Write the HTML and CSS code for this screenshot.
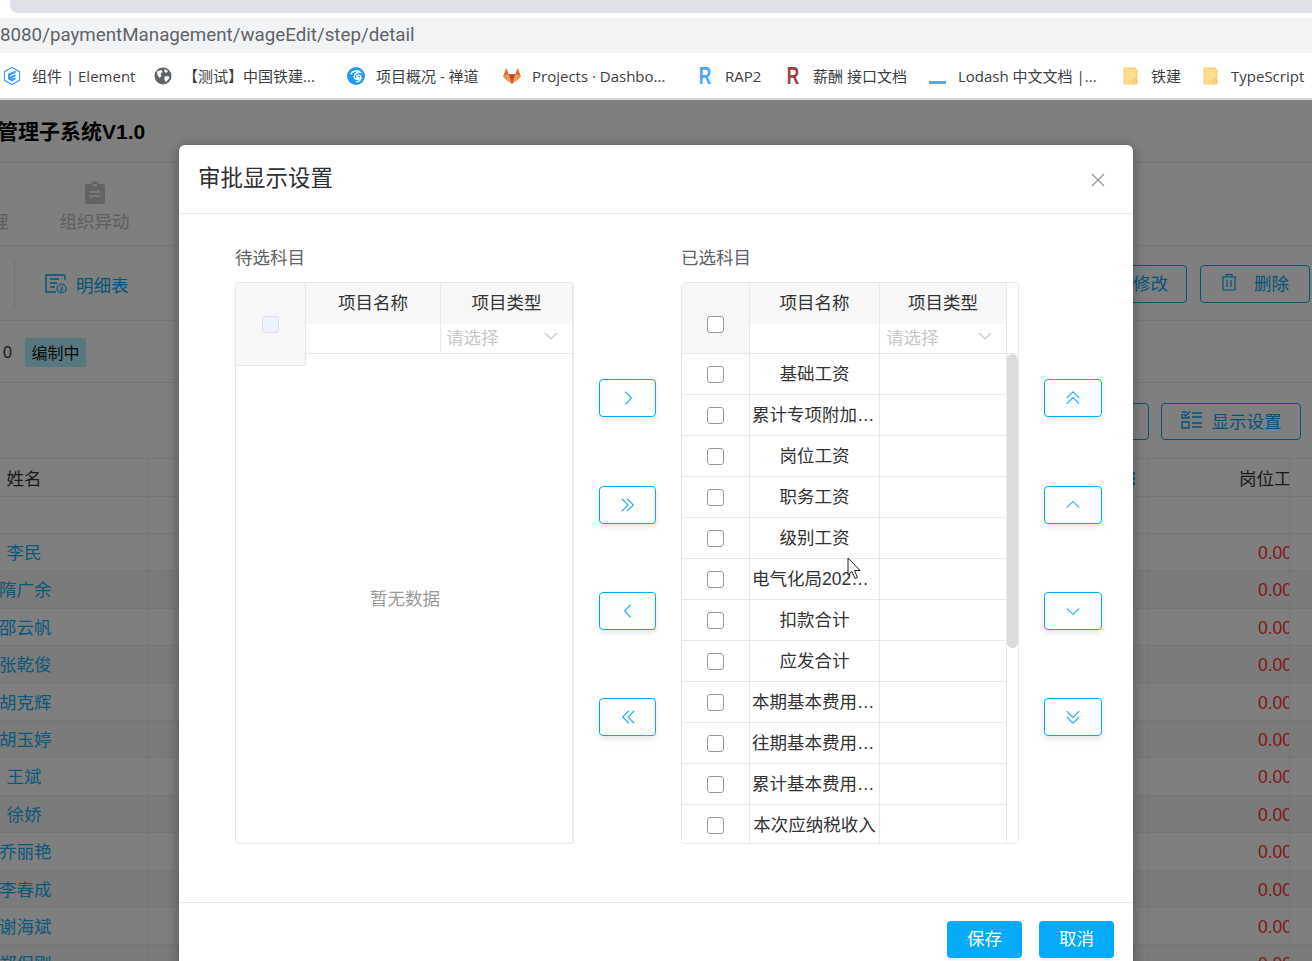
FILE: index.html
```html
<!DOCTYPE html>
<html lang="zh-CN">
<head>
  <meta charset="UTF-8" />
  <title>审批显示设置</title>
  <link rel="stylesheet" href="styles.css">
</head>
<body>
  <div class="tabstrip"><div class="tab"></div></div>
  <div class="urlbar">8080/paymentManagement/wageEdit/step/detail</div>

  <div class="bookmarks">
    <div class="bm">
      <svg class="bm-icon" viewBox="0 0 18 18"><path d="M9 0.5 16.5 4.7V13.3L9 17.5 1.5 13.3V4.7Z" fill="#fff" stroke="#409eff" stroke-width="1.2"/><path d="M5 6.8 12.6 3.6V6L7.4 8.2V9.4L12.6 7.2V9.6L7.4 11.8 12.6 10.4V12.4L9 14.4 5 12.2Z" fill="#409eff"/></svg>
      <span class="bm-text">组件 | Element</span>
    </div>
    <div class="bm">
      <svg class="bm-icon" viewBox="0 0 18 18"><circle cx="9" cy="9" r="8.5" fill="#5f6368"/><path d="M3 4.5 7.5 3 8.5 5 6.5 7 7.5 9 5.5 11 3.5 8ZM10.5 9.5 14.5 9 15.5 11 12 15 10.5 13ZM10.5 2 14 4 12.5 6 10.5 5Z" fill="#fff"/></svg>
      <span class="bm-text">【测试】中国铁建...</span>
    </div>
    <div class="bm">
      <svg class="bm-icon" viewBox="0 0 20 20"><circle cx="10" cy="10" r="10" fill="#1e9bf0"/><path d="M4 8C6 4 12 3 15 6 12 5.500 8 7 8 10.500 8 13.500 12 14.500 14 12.500 13 12.500 11 12 11 10.500 11 9 14 8.500 15.500 10.500 16.500 13 14 16.500 10 16.500" fill="none" stroke="#fff" stroke-width="1.600"/></svg>
      <span class="bm-text">项目概况 - 禅道</span>
    </div>
    <div class="bm">
      <svg class="bm-icon" viewBox="0 0 20 20"><path d="M10 19 1 12 0.500 9.500 3.500 1 6.500 8H13.500L16.500 1 19.500 9.500 19 12Z" fill="#e2673d"/><path d="M10 19 6.500 8H13.500Z" fill="#c8452b"/><path d="M10 19 1 12 0.500 9.500 6.500 8ZM10 19 19 12 19.500 9.500 13.500 8Z" fill="#eb9a58"/></svg>
      <span class="bm-text">Projects · Dashbo...</span>
    </div>
    <div class="bm">
      <span class="bm-r bm-r-blue">R</span>
      <span class="bm-text">RAP2</span>
    </div>
    <div class="bm">
      <span class="bm-r bm-r-red">R</span>
      <span class="bm-text">薪酬 接口文档</span>
    </div>
    <div class="bm">
      <span class="bm-line"></span>
      <span class="bm-text">Lodash 中文文档 |...</span>
    </div>
    <div class="bm">
      <svg class="bm-icon" viewBox="0 0 18 18"><path d="M2 1H13L15 3V17H2Z" fill="#fbdc8e" stroke="#f8ce6b"/><path d="M12 16V12.500C12 11.500 14.500 11.500 14.500 12.500V16" fill="none" stroke="#f3c14f"/></svg>
      <span class="bm-text">铁建</span>
    </div>
    <div class="bm">
      <svg class="bm-icon" viewBox="0 0 18 18"><path d="M2 1H13L15 3V17H2Z" fill="#fbdc8e" stroke="#f8ce6b"/><path d="M12 16V12.500C12 11.500 14.500 11.500 14.500 12.500V16" fill="none" stroke="#f3c14f"/></svg>
      <span class="bm-text">TypeScript</span>
    </div>
  </div>

  <div class="page">
    <div class="app-head"><span class="app-title">管理子系统V1.0</span></div>

    <div class="nav">
      <span class="nav-cut">理</span>
      <div class="nav-item">
        <svg class="nav-icon" viewBox="0 0 20 23"><path d="M2 3H6.500V1.500C6.500 0 13.500 0 13.500 1.500V3H18C19 3 20 4 20 5V21C20 22 19 23 18 23H2C1 23 0 22 0 21V5C0 4 1 3 2 3Z" fill="#c6c6c6"/><path d="M8 4H12" stroke="#fff" stroke-width="2"/><path d="M5 11H15L12.500 9M15 15H5L7.500 17" fill="none" stroke="#fff" stroke-width="1.300"/></svg>
        <span>组织异动</span>
      </div>
    </div>

    <div class="toolbar">
      <div class="toolbar-left">
        <span class="divider"></span>
        <svg class="detail-icon" viewBox="0 0 22 20"><path d="M20 1H1V18H11M20 1V6" fill="none" stroke="currentColor" stroke-width="1.400"/><path d="M5 5H14M5 9H12M5 13H10" stroke="currentColor" stroke-width="1.300"/><circle cx="16.500" cy="14.500" r="4.500" fill="none" stroke="currentColor" stroke-width="1.200"/><path d="M14.700 12 16.500 14.500 18.300 12M14.500 15H18.500M14.500 17H18.500M16.500 14.500V18.500" fill="none" stroke="currentColor" stroke-width=".8"/></svg>
        <span class="link">明细表</span>
      </div>
      <div class="toolbar-right">
        <button class="page-btn page-btn-edit">修改</button>
        <button class="page-btn page-btn-del">
          <svg class="del-icon" viewBox="0 0 16 17"><path d="M0.500 3H15.500M5 3V0.700H11V3M2 3V16H14V3M6 6V13M10 6V13" fill="none" stroke="currentColor" stroke-width="1.200"/></svg>
          <span>删除</span>
        </button>
      </div>
    </div>

    <div class="info">
      <span class="info-num">0</span>
      <span class="tag">编制中</span>
    </div>

    <div class="actions">
      <button class="page-btn page-btn-plain"></button>
      <button class="page-btn page-btn-set">
        <svg class="set-icon" viewBox="0 0 22 18"><path d="M1 3V7H8V5M1 11H8V17H1ZM11 2H21M11 6H21M11 12H21M11 16H21" fill="none" stroke="currentColor" stroke-width="1.400"/><path d="M1 1H6M2.500 3 4.500 5 9 0.500" fill="none" stroke="currentColor" stroke-width="1.400"/></svg>
        <span>显示设置</span>
      </button>
    </div>

    <div class="grid-head row"><div class="c-name"><span class="name-in name-dark">姓名</span></div><div class="c-mid"><span class="dots"></span></div><div class="c-num c-title">岗位工资</div></div>
    <div class="grid-filter row"><div class="c-name"></div><div class="c-mid"></div><div class="c-num"></div></div>
    <div class="row"><div class="c-name"><span class="name-in">李民</span></div><div class="c-mid"></div><div class="c-num">0.00</div></div>
    <div class="row row-alt"><div class="c-name"><span class="name-in">隋广余</span></div><div class="c-mid"></div><div class="c-num">0.00</div></div>
    <div class="row"><div class="c-name"><span class="name-in">邵云帆</span></div><div class="c-mid"></div><div class="c-num">0.00</div></div>
    <div class="row row-alt"><div class="c-name"><span class="name-in">张乾俊</span></div><div class="c-mid"></div><div class="c-num">0.00</div></div>
    <div class="row"><div class="c-name"><span class="name-in">胡克辉</span></div><div class="c-mid"></div><div class="c-num">0.00</div></div>
    <div class="row row-alt"><div class="c-name"><span class="name-in">胡玉婷</span></div><div class="c-mid"></div><div class="c-num">0.00</div></div>
    <div class="row"><div class="c-name"><span class="name-in">王斌</span></div><div class="c-mid"></div><div class="c-num">0.00</div></div>
    <div class="row row-alt"><div class="c-name"><span class="name-in">徐娇</span></div><div class="c-mid"></div><div class="c-num">0.00</div></div>
    <div class="row"><div class="c-name"><span class="name-in">乔丽艳</span></div><div class="c-mid"></div><div class="c-num">0.00</div></div>
    <div class="row row-alt"><div class="c-name"><span class="name-in">李春成</span></div><div class="c-mid"></div><div class="c-num">0.00</div></div>
    <div class="row"><div class="c-name"><span class="name-in">谢海斌</span></div><div class="c-mid"></div><div class="c-num">0.00</div></div>
    <div class="row row-alt"><div class="c-name"><span class="name-in">郑保刚</span></div><div class="c-mid"></div><div class="c-num">0.00</div></div>

    <div class="overlay"></div>
  </div>

  <div class="modal">
    <div class="modal-head">
      <span class="modal-title">审批显示设置</span>
      <svg class="modal-close" viewBox="0 0 14 14"><path d="M1 1 13 13M13 1 1 13" stroke="#909399" stroke-width="1.200"/></svg>
    </div>

    <div class="modal-body">
      <div class="section section-left">
        <div class="section-label">待选科目</div>
        <div class="panel">
          <div class="fixed-col"><span class="check check-off"></span></div>
          <div class="t-head t-head-left">
            <div class="th-check"></div>
            <div class="th-group">
              <div class="th-line"><div class="th-name">项目名称</div><div class="th-type">项目类型</div></div>
              <div class="th-line th-filter"><div class="th-name"></div><div class="th-type"><span>请选择</span><svg class="caret" viewBox="0 0 14 8"><path d="M1 1 7 7 13 1" fill="none" stroke="#c8c8c8" stroke-width="1.200"/></svg></div></div>
            </div>
          </div>
          <div class="empty">暂无数据</div>
        </div>
      </div>

      <div class="move-col">
        <button class="move-btn"><svg class="move-icon" viewBox="0 0 18 18"><path d="M6 2 13 9 6 16" /></svg></button>
        <button class="move-btn"><svg class="move-icon" viewBox="0 0 18 18"><path d="M2 2 9 9 2 16M8 2 15 9 8 16" /></svg></button>
        <button class="move-btn"><svg class="move-icon" viewBox="0 0 18 18"><path d="M12 2 5 9 12 16" /></svg></button>
        <button class="move-btn"><svg class="move-icon" viewBox="0 0 18 18"><path d="M16 2 9 9 16 16M10 2 3 9 10 16" /></svg></button>
      </div>

      <div class="section section-right">
        <div class="section-label">已选科目</div>
        <div class="panel">
          <div class="t-head">
            <div class="th-check th-check-on"><span class="check"></span></div>
            <div class="th-group">
              <div class="th-line"><div class="th-name">项目名称</div><div class="th-type">项目类型</div></div>
              <div class="th-line th-filter"><div class="th-name"></div><div class="th-type"><span>请选择</span><svg class="caret" viewBox="0 0 14 8"><path d="M1 1 7 7 13 1" fill="none" stroke="#c8c8c8" stroke-width="1.200"/></svg></div></div>
            </div>
            <div class="th-gutter"></div>
          </div>
          <div class="t-body">
            <div class="t-rows">
              <div class="tr"><div class="td-check"><span class="check"></span></div><div class="td-name">基础工资</div><div class="td-type"></div></div>
              <div class="tr"><div class="td-check"><span class="check"></span></div><div class="td-name">累计专项附加扣除</div><div class="td-type"></div></div>
              <div class="tr"><div class="td-check"><span class="check"></span></div><div class="td-name">岗位工资</div><div class="td-type"></div></div>
              <div class="tr"><div class="td-check"><span class="check"></span></div><div class="td-name">职务工资</div><div class="td-type"></div></div>
              <div class="tr"><div class="td-check"><span class="check"></span></div><div class="td-name">级别工资</div><div class="td-type"></div></div>
              <div class="tr"><div class="td-check"><span class="check"></span></div><div class="td-name">电气化局2020津贴</div><div class="td-type"></div></div>
              <div class="tr"><div class="td-check"><span class="check"></span></div><div class="td-name">扣款合计</div><div class="td-type"></div></div>
              <div class="tr"><div class="td-check"><span class="check"></span></div><div class="td-name">应发合计</div><div class="td-type"></div></div>
              <div class="tr"><div class="td-check"><span class="check"></span></div><div class="td-name">本期基本费用合计</div><div class="td-type"></div></div>
              <div class="tr"><div class="td-check"><span class="check"></span></div><div class="td-name">往期基本费用合计</div><div class="td-type"></div></div>
              <div class="tr"><div class="td-check"><span class="check"></span></div><div class="td-name">累计基本费用合计</div><div class="td-type"></div></div>
              <div class="tr"><div class="td-check"><span class="check"></span></div><div class="td-name">本次应纳税收入</div><div class="td-type"></div></div>
            </div>
            <div class="scroll-track"><div class="scroll-thumb"></div></div>
          </div>
        </div>
      </div>

      <div class="move-col">
        <button class="move-btn"><svg class="move-icon" viewBox="0 0 18 18"><path d="M2 9 9 2 16 9M2 15.500 9 8.500 16 15.500" /></svg></button>
        <button class="move-btn"><svg class="move-icon" viewBox="0 0 18 18"><path d="M2 12 9 5 16 12" /></svg></button>
        <button class="move-btn"><svg class="move-icon" viewBox="0 0 18 18"><path d="M2 6 9 13 16 6" /></svg></button>
        <button class="move-btn"><svg class="move-icon" viewBox="0 0 18 18"><path d="M2 2.500 9 9.500 16 2.500M2 9 9 16 16 9" /></svg></button>
      </div>
    </div>

    <div class="modal-foot">
      <button class="foot-btn">保存</button>
      <button class="foot-btn">取消</button>
    </div>
  </div>

  <svg class="cursor" viewBox="0 0 15 23"><path d="M1 1V18L5 14.500 8 21.500 10.500 20.500 7.500 13.500H13Z" fill="#fff" stroke="#222" stroke-width="1"/></svg>
</body>
</html>
```

FILE: styles.css
```css
html, body {
  margin: 0;
  padding: 0;
  height: 961px;
  overflow: hidden;
}

body {
  position: relative;
  background: #fff;
  font-family: "Liberation Sans", "Noto Sans CJK SC", sans-serif;
  font-size: 17.5px;
  color: #333;
}

button {
  font-family: inherit;
  font-size: inherit;
  cursor: pointer;
}

/* browser chrome */
.tabstrip {
  height: 13px;
  padding-left: 10px;
  margin-bottom: 5px;
}

.tab {
  height: 13px;
  background: #dee1e6;
  border-bottom-left-radius: 8px;
}

.urlbar {
  height: 35px;
  line-height: 35px;
  background: #f1f3f4;
  color: #5f6368;
  font-family: Roboto, sans-serif;
  font-size: 18.75px;
  white-space: nowrap;
}

.bookmarks {
  display: grid;
  grid-template-columns: 151px 193px 156px 193px 88px 145px 193px 80px auto;
  height: 45px;
  padding-left: 3px;
  align-items: center;
  border-bottom: 2px solid #d6d7d9;
  overflow: hidden;
  font-family: "Open Sans", "Noto Sans CJK SC", sans-serif;
  font-size: 15px;
  color: #3c4043;
  white-space: nowrap;
}

.bm {
  display: flex;
  align-items: center;
}

.bm-icon {
  width: 18px;
  height: 18px;
  margin-right: 11px;
  flex-shrink: 0;
}

.bm-r {
  width: 18px;
  margin-right: 11px;
  text-align: center;
  font-family: "Liberation Sans", sans-serif;
  font-weight: bold;
  font-size: 24px;
  line-height: 20px;
  transform: scaleX(0.72);
}

.bm-r-blue {
  color: #4da6f5;
}

.bm-r-red {
  color: #a1403f;
}

.bm-line {
  width: 17px;
  height: 3px;
  margin: 14px 12px 0 0;
  background: #3fb0f7;
}

/* page behind the dialog */
.page {
  position: relative;
  height: 861px;
  overflow: hidden;
  background: #fff;
  color: #000;
}

.overlay {
  position: absolute;
  inset: 0;
  background: rgba(0, 0, 0, 0.5);
}

.app-head {
  height: 62px;
  border-bottom: 1px solid #ececec;
}

.app-title {
  display: block;
  margin-left: -3px;
  line-height: 64px;
  font-size: 21px;
  font-weight: bold;
}

.nav {
  display: flex;
  height: 82px;
  border-bottom: 1px solid #ececec;
  color: #bdbdbd;
}

.nav-cut {
  width: 68px;
  margin-left: -9px;
  padding-top: 47px;
  line-height: 24px;
}

.nav-item {
  display: flex;
  flex-direction: column;
  align-items: center;
  width: 71px;
  padding-top: 18px;
  line-height: 24px;
}

.nav-icon {
  width: 20px;
  height: 23px;
  margin-bottom: 6px;
}

.toolbar {
  display: flex;
  justify-content: space-between;
  align-items: center;
  height: 72px;
  padding-top: 2px;
  border-bottom: 1px solid #ececec;
}

.toolbar-left {
  display: flex;
  align-items: center;
  color: #03a9f4;
}

.divider {
  width: 1px;
  height: 49px;
  margin: 0 30px 0 14px;
  background: #e4e4e4;
}

.detail-icon {
  width: 22px;
  height: 20px;
  margin-right: 9px;
}

.toolbar-right {
  display: flex;
  gap: 13px;
  margin-right: 2px;
}

.page-btn {
  display: flex;
  align-items: center;
  justify-content: center;
  height: 38px;
  padding: 0 0 4px;
  border: 1px solid #03a9f4;
  border-radius: 4px;
  background: #fff;
  color: #03a9f4;
}

.page-btn-edit {
  width: 110px;
  justify-content: flex-end;
  padding-right: 18px;
}

.page-btn-del {
  width: 110px;
}

.del-icon {
  width: 16px;
  height: 17px;
  margin-right: 17px;
}

.info {
  display: flex;
  align-items: center;
  height: 61px;
  border-bottom: 1px solid #ececec;
}

.info-num {
  width: 25px;
  margin-top: 3px;
  padding-left: 3px;
  box-sizing: border-box;
  font-size: 16px;
  color: #333;
}

.tag {
  display: block;
  width: 61px;
  height: 29px;
  line-height: 31px;
  margin-top: 2px;
  text-align: center;
  font-size: 16px;
  border-radius: 2px;
  background: #b0f0ff;
  color: #111;
}

.actions {
  display: flex;
  justify-content: flex-end;
  align-items: center;
  gap: 12px;
  height: 76px;
  padding-right: 11px;
  padding-top: 2px;
  box-sizing: border-box;
  border-bottom: 1px solid #ececec;
}

.page-btn-plain {
  width: 60px;
  height: 37px;
}

.page-btn-set {
  width: 140px;
  height: 37px;
  padding-bottom: 3px;
}

.set-icon {
  width: 22px;
  height: 18px;
  margin-right: 9px;
}

.row {
  display: grid;
  grid-template-columns: 149px 1000px 141px;
  height: 37.4px;
  box-sizing: border-box;
  border-bottom: 1px solid #ececec;
  line-height: 38px;
  color: #14b0f5;
}

.row-alt {
  background: #f6f6f6;
}

.grid-head {
  height: 38px;
  line-height: 40px;
  color: #333;
}

.grid-filter {
  height: 37px;
}

.c-name {
  border-right: 1px solid #ececec;
  white-space: nowrap;
}

.name-in {
  display: inline-block;
  width: 50px;
  margin-left: -1px;
  text-align: center;
  white-space: nowrap;
}

.name-dark {
  color: #333;
}

.c-mid {
  position: relative;
  border-right: 1px solid #ececec;
}

.dots {
  position: absolute;
  top: 13px;
  right: 13px;
  width: 3px;
  height: 3px;
  background: #14b0f5;
  box-shadow: 0 5px 0 #14b0f5, 0 10px 0 #14b0f5;
}

.c-num {
  border-right: 1px solid #ececec;
  padding-left: 109px;
  overflow: hidden;
  white-space: nowrap;
  color: #ff3030;
}

.c-title {
  padding-left: 90px;
  color: #333;
}

/* dialog */
.modal {
  position: absolute;
  top: 145px;
  left: 179px;
  width: 954px;
  height: 832px;
  border-radius: 6px;
  background: #fff;
  box-shadow: 0 2px 14px rgba(0, 0, 0, 0.35);
}

.modal-head {
  display: flex;
  justify-content: space-between;
  align-items: center;
  height: 68px;
  padding: 0 28px 0 19px;
  border-bottom: 1px solid #e8e8e8;
}

.modal-title {
  margin-top: -6px;
  font-size: 22.5px;
  color: #303133;
}

.modal-close {
  width: 14px;
  height: 14px;
  margin-top: 2px;
}

.modal-body {
  display: flex;
  height: 688px;
  box-sizing: border-box;
  padding: 31px 0 0 56px;
}

.section-left {
  width: 339px;
}

.section-right {
  width: 338px;
}

.section-label {
  height: 24px;
  line-height: 26px;
  margin-bottom: 13px;
  color: #606266;
}

.panel {
  position: relative;
  display: flex;
  flex-direction: column;
  height: 562px;
  box-sizing: border-box;
  border: 1px solid #e8e8e8;
  border-radius: 4px;
  overflow: hidden;
}

.section-left .panel {
  border-right-width: 2px;
}

.fixed-col {
  position: absolute;
  top: 0;
  left: 0;
  display: flex;
  align-items: center;
  justify-content: center;
  width: 69px;
  height: 82px;
  background: #f7f7f7;
  border-right: 1px solid #e8e8e8;
  border-bottom: 1px solid #e8e8e8;
}

.t-head {
  display: flex;
  height: 70px;
  border-bottom: 1px solid #e8e8e8;
  flex-shrink: 0;
}

.th-check {
  width: 68px;
  box-sizing: border-box;
  border-right: 1px solid #e8e8e8;
  flex-shrink: 0;
}

.t-head-left .th-check {
  width: 70px;
}

.th-check-on {
  display: flex;
  align-items: center;
  justify-content: center;
  padding-top: 12px;
  background: #f7f7f7;
}

.th-group {
  flex: 1;
}

.th-line {
  display: flex;
  height: 41px;
  background: #f7f7f7;
  line-height: 41px;
  text-align: center;
}

.th-filter {
  height: 29px;
  background: #fff;
  line-height: 29px;
  text-align: left;
  color: #c8c8c8;
}

.th-name {
  width: 130px;
  box-sizing: border-box;
  border-right: 1px solid #e8e8e8;
  flex-shrink: 0;
}

.t-head-left .th-name {
  width: 135px;
}

.th-type {
  display: flex;
  flex: 1;
  justify-content: center;
}

.th-filter .th-type {
  justify-content: space-between;
  align-items: center;
  padding: 0 14px 0 5px;
}

.section-right .th-filter .th-type {
  padding-left: 6px;
}

.caret {
  width: 14px;
  height: 8px;
  margin-top: -6px;
}

.th-gutter {
  width: 11px;
  border-left: 1px solid #e8e8e8;
  flex-shrink: 0;
}

.empty {
  display: flex;
  flex: 1;
  align-items: center;
  justify-content: center;
  padding: 0 0 3px 2px;
  color: #999;
}

.t-body {
  display: flex;
  flex: 1;
  min-height: 0;
}

.t-rows {
  flex: 1;
  min-width: 0;
  overflow: hidden;
}

.tr {
  display: flex;
  height: 41px;
  box-sizing: border-box;
  border-bottom: 1px solid #e8e8e8;
  line-height: 40px;
  color: #333;
}

.td-check {
  display: flex;
  align-items: center;
  justify-content: center;
  width: 68px;
  box-sizing: border-box;
  border-right: 1px solid #e8e8e8;
}

.td-name {
  width: 130px;
  box-sizing: border-box;
  padding: 0 2px;
  border-right: 1px solid #e8e8e8;
  overflow: hidden;
  text-align: center;
  text-overflow: ellipsis;
  white-space: nowrap;
}

.td-type {
  flex: 1;
}

.scroll-track {
  width: 11px;
  flex-shrink: 0;
  border-left: 1px solid #e8e8e8;
}

.scroll-thumb {
  height: 294px;
  border-radius: 6px;
  background: #dcdcdc;
}

.check {
  display: block;
  width: 17px;
  height: 17px;
  box-sizing: border-box;
  border: 1px solid #999;
  border-radius: 3px;
  background: #fff;
}

.check-off {
  border-color: #dcdfe6;
  background: #edf2fc;
}

.move-col {
  display: flex;
  flex-direction: column;
  flex-shrink: 0;
  gap: 68px;
  width: 57px;
  margin: 134px 25px 0;
}

.move-btn {
  display: flex;
  align-items: center;
  justify-content: center;
  width: 57px;
  height: 38px;
  padding: 0;
  border: 1px solid #03a9f4;
  border-radius: 4px;
  background: #fff;
  box-shadow: 0 3px 6px rgba(0, 0, 0, 0.1);
}

.move-btn:first-child {
  margin-bottom: 1px;
}

.move-col:last-child {
  width: 58px;
}

.move-col:last-child .move-btn {
  width: 58px;
}

.move-icon {
  width: 16px;
  height: 16px;
  fill: none;
  stroke: #2aaef5;
  stroke-width: 1.300;
}

.modal-foot {
  display: flex;
  justify-content: flex-end;
  gap: 17px;
  padding: 18px 19px 0 0;
  border-top: 1px solid #e8e8e8;
}

.foot-btn {
  width: 75px;
  height: 37px;
  padding: 0 0 4px;
  border: none;
  border-radius: 4px;
  background: #03aaf7;
  color: #fff;
  box-shadow: 0 2px 5px rgba(0, 0, 0, 0.08);
}

.cursor {
  position: absolute;
  top: 557px;
  left: 847px;
  width: 15px;
  height: 23px;
}
```
